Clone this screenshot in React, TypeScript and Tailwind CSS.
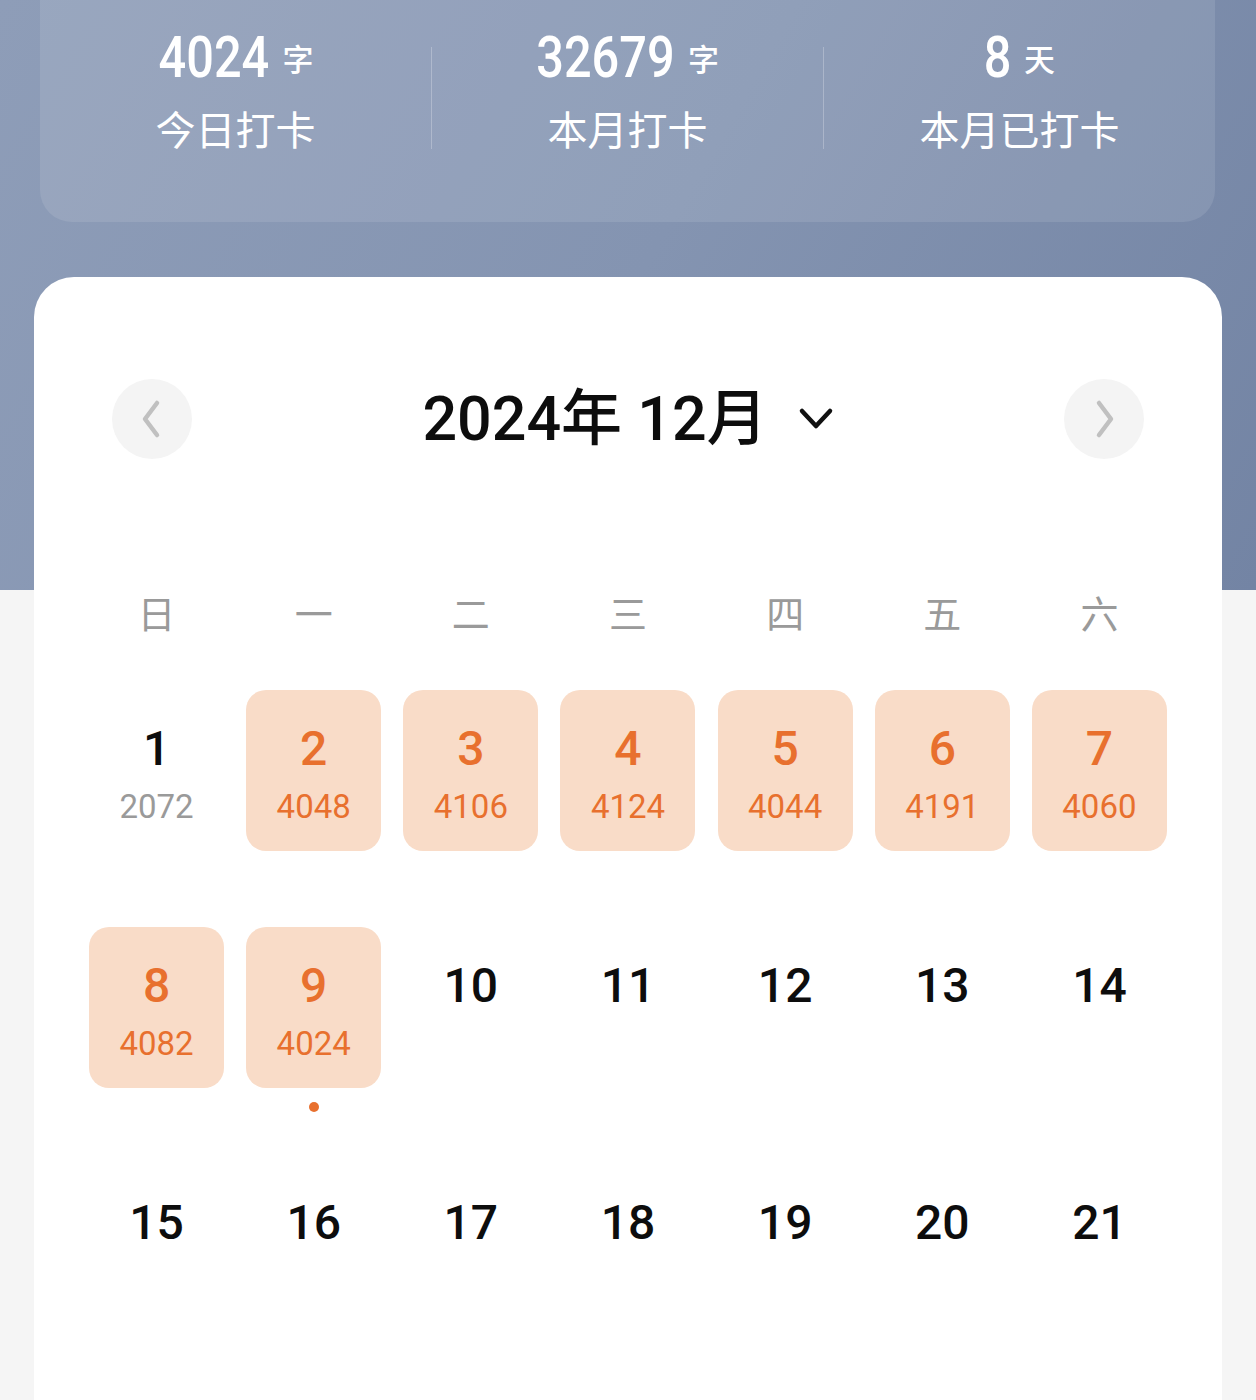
import React from "react";

const CJK = "font-['Roboto','Noto_Sans_CJK_SC',sans-serif]";

type Day = { d: number; n?: number; done?: boolean; today?: boolean };

const days: Day[] = [
  { d: 1, n: 2072 },
  { d: 2, n: 4048, done: true },
  { d: 3, n: 4106, done: true },
  { d: 4, n: 4124, done: true },
  { d: 5, n: 4044, done: true },
  { d: 6, n: 4191, done: true },
  { d: 7, n: 4060, done: true },
  { d: 8, n: 4082, done: true },
  { d: 9, n: 4024, done: true, today: true },
  ...Array.from({ length: 12 }, (_, i) => ({ d: i + 10 })),
];

function Stat({ num, unit, label, squeeze }: { num: string; unit: string; label: string; squeeze: string }) {
  return (
    <div className="flex flex-1 flex-col items-center">
      <div className="flex items-baseline gap-[13px] text-white">
        <span className={`inline-block origin-center scale-x-[0.84] font-['Roboto',sans-serif] text-[58px] font-medium leading-[60px] ${squeeze}`}>
          {num}
        </span>
        <span className="-translate-y-[6px] font-['Noto_Sans_CJK_SC',sans-serif] text-[31px] font-medium leading-[30px]">{unit}</span>
      </div>
      <div className="mt-[17px] font-['Noto_Sans_CJK_SC',sans-serif] text-[40px] leading-[48px] text-white">
        {label}
      </div>
    </div>
  );
}

function Cell({ day }: { day: Day }) {
  if (day.done) {
    return (
      <div className="flex justify-center">
        <div className="relative flex h-[161px] w-[135px] flex-col items-center rounded-[20px] bg-[#f9dcc8]">
          <div className="mt-[31px] h-[56px] font-['Roboto',sans-serif] text-[48px] font-medium leading-[56px] text-[#e8702e]">
            {day.d}
          </div>
          <div className="mt-[12px] font-['Roboto',sans-serif] text-[33px] leading-[36px] text-[#e8702e]">
            {day.n}
          </div>
          {day.today && (
            <div className="absolute bottom-[-24px] left-1/2 h-[10px] w-[10px] -translate-x-1/2 rounded-full bg-[#e8702e]" />
          )}
        </div>
      </div>
    );
  }
  return (
    <div className="flex justify-center">
      <div className="flex h-[161px] w-[135px] flex-col items-center">
        <div className="mt-[31px] h-[56px] font-['Roboto',sans-serif] text-[48px] font-medium leading-[56px] text-[#0d0d0d]">
          {day.d}
        </div>
        {day.n && (
          <div className="mt-[12px] font-['Roboto',sans-serif] text-[33px] leading-[36px] text-[#9a9a9a]">
            {day.n}
          </div>
        )}
      </div>
    </div>
  );
}

export default function App() {
  const weeks = ["日", "一", "二", "三", "四", "五", "六"];
  return (
    <div className="h-[1400px] w-full overflow-hidden bg-[#f5f5f5]">
      <div className="flex h-[590px] flex-col bg-[linear-gradient(120deg,#8e9db8_0%,#8494b1_50%,#7384a4_100%)] pl-[40px] pr-[41px]">
        <div className="-mt-[40px] flex h-[262px] shrink-0 items-start rounded-[32px] bg-white/10 pt-[67px]">
          <Stat num="4024" unit="字" label="今日打卡" squeeze="-mx-[10px]" />
          <div className="mt-[20px] h-[102px] w-px bg-white/25" />
          <Stat num="32679" unit="字" label="本月打卡" squeeze="-mx-[13px]" />
          <div className="mt-[20px] h-[102px] w-px bg-white/25" />
          <Stat num="8" unit="天" label="本月已打卡" squeeze="-mx-[3px]" />
        </div>
      </div>

      <div className="mx-[34px] -mt-[313px] h-[1200px] rounded-t-[40px] bg-white px-[44px] pt-[102px]">
        <div className="flex h-[80px] items-center justify-between px-[34px]">
          <div className="flex h-[80px] w-[80px] items-center justify-center rounded-full bg-[#f4f4f4]">
            <svg width="20" height="40" viewBox="0 0 20 40" fill="none">
              <polyline points="15,4 3,20 15,36" stroke="#c0c0c0" strokeWidth="4.5" strokeLinecap="round" strokeLinejoin="round" />
            </svg>
          </div>
          <div className="flex items-center">
            <span className={`${CJK} text-[61px] font-medium leading-[80px] text-[#0d0d0d]`}>2024年 12月</span>
            <svg className="ml-[30px]" width="36" height="24" viewBox="0 0 36 24" fill="none">
              <polyline points="4,4 18,19 32,4" stroke="#111" strokeWidth="4.5" strokeLinecap="round" strokeLinejoin="round" />
            </svg>
          </div>
          <div className="flex h-[80px] w-[80px] items-center justify-center rounded-full bg-[#f4f4f4]">
            <svg width="20" height="40" viewBox="0 0 20 40" fill="none">
              <polyline points="5,4 17,20 5,36" stroke="#c0c0c0" strokeWidth="4.5" strokeLinecap="round" strokeLinejoin="round" />
            </svg>
          </div>
        </div>

        <div className="mt-[123px] grid h-[60px] grid-cols-7 items-center">
          {weeks.map((w) => (
            <div key={w} className="text-center font-['Noto_Sans_CJK_SC',sans-serif] text-[38px] leading-[60px] text-[#9a9a9a]">
              {w}
            </div>
          ))}
        </div>

        <div className="mt-[48px] grid grid-cols-7 gap-y-[76px]">
          {days.map((d) => (
            <Cell key={d.d} day={d} />
          ))}
        </div>
      </div>
    </div>
  );
}
